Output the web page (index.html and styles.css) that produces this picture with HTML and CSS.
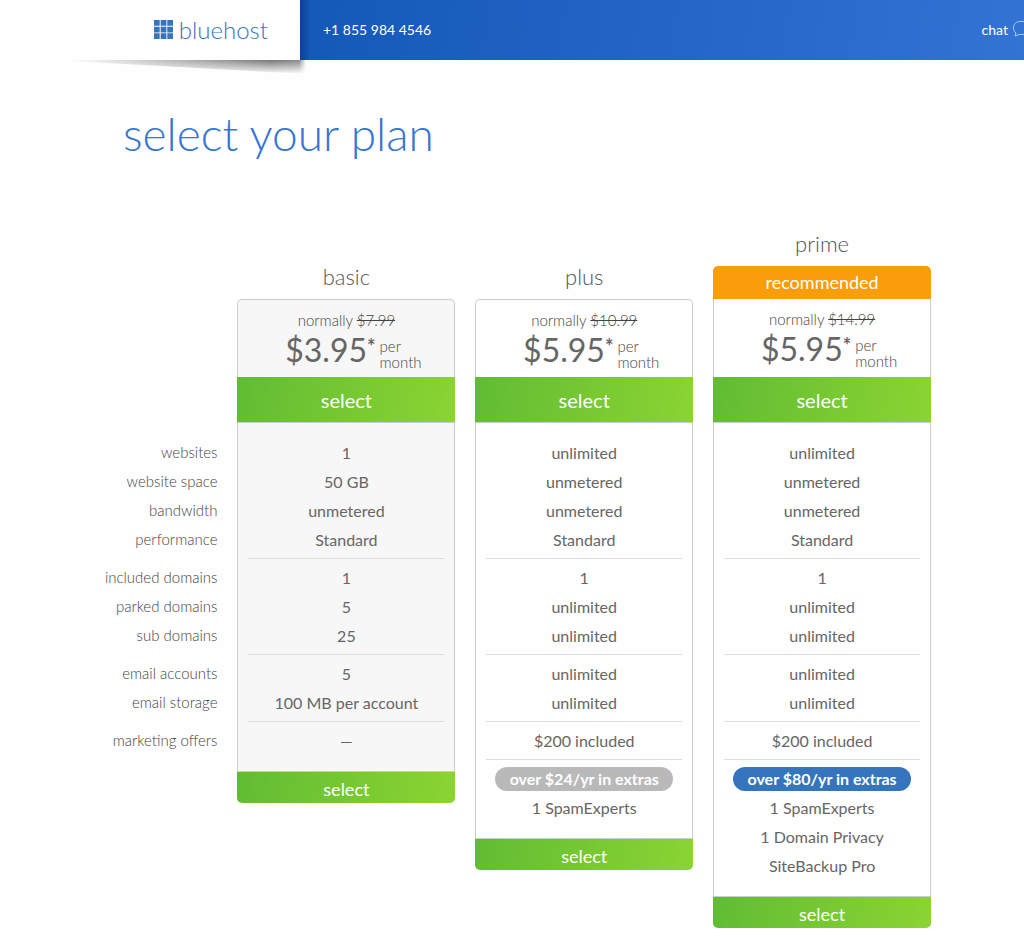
FILE: index.html
```html
<!DOCTYPE html>
<html lang="en">
<head>
    <meta charset="UTF-8">
    <meta name="viewport" content="width=device-width, initial-scale=1.0">
    <title>select your plan - bluehost</title>
    <link rel="stylesheet" href="styles.css">
</head>
<body>
    <header class="header">
        <a class="logo" href="#">
            <svg class="logo-icon" viewBox="0 0 19 19" aria-hidden="true">
                <path fill="#3575bd" d="M0 0h5.700v5.700H0zM6.700 0h5.700v5.700H6.700zM13.300 0H19v5.700h-5.700zM0 6.700h5.700v5.700H0zM6.700 6.700h5.700v5.700H6.700zM13.300 6.700H19v5.700h-5.700zM0 13.300h5.700V19H0zM6.700 13.300h5.700V19H6.700zM13.300 13.300H19V19h-5.700z"/>
            </svg>
            <span>bluehost</span>
        </a>
        <div class="topbar">
            <a class="phone" href="tel:+18559844546">+1 855 984 4546</a>
            <a class="chat" href="#">
                chat
                <svg class="chat-icon" viewBox="0 0 20 16" aria-hidden="true">
                    <path fill="none" stroke="#a9c8f5" d="M7 .5h6c4 0 6.500 2.800 6.500 6.500s-2.500 6.500-6.500 6.500H6L2 15l1-3C1.300 10.700.5 9 .5 7 .5 3.300 3 .5 7 .5z"/>
                </svg>
            </a>
        </div>
    </header>

    <main class="container">
        <h1>select your plan</h1>

        <div class="plans">
            <div class="labels">
                <ul class="group">
                    <li>websites</li>
                    <li>website space</li>
                    <li>bandwidth</li>
                    <li>performance</li>
                </ul>
                <ul class="group">
                    <li>included domains</li>
                    <li>parked domains</li>
                    <li>sub domains</li>
                </ul>
                <ul class="group">
                    <li>email accounts</li>
                    <li>email storage</li>
                </ul>
                <ul class="group">
                    <li>marketing offers</li>
                </ul>
            </div>

            <section class="plan plan-basic">
                <h2>basic</h2>
                <div class="card">
                    <div class="price-box">
                        <p class="normally">normally <s>$7.99</s></p>
                        <p class="price"><strong>$3.95<sup>*</sup></strong> <span>per<br>month</span></p>
                    </div>
                    <button class="select" type="button">select</button>
                    <div class="features">
                        <ul class="group">
                            <li>1</li>
                            <li>50 GB</li>
                            <li>unmetered</li>
                            <li>Standard</li>
                        </ul>
                        <ul class="group">
                            <li>1</li>
                            <li>5</li>
                            <li>25</li>
                        </ul>
                        <ul class="group">
                            <li>5</li>
                            <li>100 MB per account</li>
                        </ul>
                        <ul class="group">
                            <li>—</li>
                        </ul>
                    </div>
                    <button class="select select-bottom" type="button">select</button>
                </div>
            </section>

            <section class="plan">
                <h2>plus</h2>
                <div class="card">
                    <div class="price-box">
                        <p class="normally">normally <s>$10.99</s></p>
                        <p class="price"><strong>$5.95<sup>*</sup></strong> <span>per<br>month</span></p>
                    </div>
                    <button class="select" type="button">select</button>
                    <div class="features">
                        <ul class="group">
                            <li>unlimited</li>
                            <li>unmetered</li>
                            <li>unmetered</li>
                            <li>Standard</li>
                        </ul>
                        <ul class="group">
                            <li>1</li>
                            <li>unlimited</li>
                            <li>unlimited</li>
                        </ul>
                        <ul class="group">
                            <li>unlimited</li>
                            <li>unlimited</li>
                        </ul>
                        <ul class="group">
                            <li>$200 included</li>
                        </ul>
                        <ul class="group">
                            <li><span class="extras">over $24/yr in extras</span></li>
                            <li>1 SpamExperts</li>
                        </ul>
                    </div>
                    <button class="select select-bottom" type="button">select</button>
                </div>
            </section>

            <section class="plan plan-prime">
                <h2>prime</h2>
                <p class="recommended">recommended</p>
                <div class="card">
                    <div class="price-box">
                        <p class="normally">normally <s>$14.99</s></p>
                        <p class="price"><strong>$5.95<sup>*</sup></strong> <span>per<br>month</span></p>
                    </div>
                    <button class="select" type="button">select</button>
                    <div class="features">
                        <ul class="group">
                            <li>unlimited</li>
                            <li>unmetered</li>
                            <li>unmetered</li>
                            <li>Standard</li>
                        </ul>
                        <ul class="group">
                            <li>1</li>
                            <li>unlimited</li>
                            <li>unlimited</li>
                        </ul>
                        <ul class="group">
                            <li>unlimited</li>
                            <li>unlimited</li>
                        </ul>
                        <ul class="group">
                            <li>$200 included</li>
                        </ul>
                        <ul class="group">
                            <li><span class="extras">over $80/yr in extras</span></li>
                            <li>1 SpamExperts</li>
                            <li>1 Domain Privacy</li>
                            <li>SiteBackup Pro</li>
                        </ul>
                    </div>
                    <button class="select select-bottom" type="button">select</button>
                </div>
            </section>
        </div>
    </main>
</body>
</html>
```
FILE: styles.css
```css
* {
    margin: 0;
    padding: 0;
    box-sizing: border-box;
}

body {
    background-color: #fefefe;
    color: #666;
    font-family: Lato, "Open Sans", sans-serif;
    font-size: 16px;
}

a {
    color: inherit;
    text-decoration: none;
}

ul {
    list-style: none;
}

/* header */
.header {
    display: flex;
    height: 60px;
}

.logo {
    position: relative;
    display: flex;
    flex: none;
    align-items: center;
    justify-content: flex-end;
    gap: 6px;
    width: 300px;
    padding: 0 32px 2px 0;
    background-color: #fefefe;
    color: #3575bd;
    font-size: 24px;
    font-weight: 300;
}

/* lifted corner shadow under the logo tab */
.logo::after {
    content: "";
    position: absolute;
    top: 100%;
    left: 70px;
    right: -6px;
    height: 14px;
    background: linear-gradient(to right, transparent, #777 85%, #888 97%, transparent);
    clip-path: polygon(0 0, 100% 0, 100% 100%, 0 1px);
    -webkit-mask-image: linear-gradient(to bottom, #000, transparent);
    mask-image: linear-gradient(to bottom, #000, transparent);
}

.logo-icon {
    width: 19px;
    height: 19px;
}

.topbar {
    display: flex;
    flex: 1;
    align-items: center;
    justify-content: space-between;
    padding: 0 0 2px 23px;
    overflow: hidden;
    background: linear-gradient(to right, rgba(0, 20, 80, 0.35), transparent 10px),
        linear-gradient(100deg, #1458b8, #3273d4);
    color: #fff;
    font-size: 14px;
}

.chat {
    display: flex;
    align-items: center;
    gap: 5px;
    margin-right: -9px;
}

.chat-icon {
    width: 20px;
    height: 16px;
}

/* page */
.container {
    max-width: 838px;
    margin: 0 auto;
    padding-bottom: 12px;
}

h1 {
    padding: 42px 0 56px 30px;
    color: #3575d3;
    font-size: 46px;
    font-weight: 300;
    line-height: 64px;
}

.plans {
    display: grid;
    grid-template-columns: minmax(0, 4fr) repeat(3, minmax(0, 7fr));
    gap: 20px;
    align-items: start;
}

.labels {
    padding-top: 216px;
    color: #444;
    font-size: 15px;
    font-weight: 300;
    text-align: right;
    white-space: nowrap;
}

.plan {
    padding-top: 33px;
    text-align: center;
}

.plan-prime {
    padding-top: 0;
}

h2 {
    color: #555;
    font-size: 22px;
    font-weight: 300;
    line-height: 44px;
}

.recommended {
    border-radius: 5px 5px 0 0;
    background-color: #fa9d0a;
    color: #fff;
    font-size: 18px;
    line-height: 33px;
}

.card {
    border-radius: 5px;
    background-color: #fefefe;
}

.price-box {
    height: 78px;
    padding-top: 10px;
    border: 1px solid #ccc;
    border-bottom: 0;
    border-radius: 5px 5px 0 0;
}

.plan-prime .price-box {
    border-top: 0;
    border-radius: 0;
}

.plan-basic .card {
    background-color: #f7f7f7;
}

.normally {
    color: #444;
    font-size: 15px;
    font-weight: 300;
    line-height: 20px;
}

.price {
    display: flex;
    align-items: center;
    justify-content: center;
    gap: 4px;
    padding-left: 14px;
    font-weight: 300;
    line-height: 16px;
    text-align: left;
}

.price strong {
    font-size: 32px;
    font-weight: 400;
    line-height: 36px;
}

.price sup {
    font-size: 20px;
    font-weight: 700;
    line-height: 0;
    vertical-align: 8px;
}

.price span {
    padding-top: 8px;
    color: #444;
    font-size: 15px;
}

.select {
    display: block;
    width: 100%;
    height: 45px;
    border: 0;
    background: linear-gradient(100deg, #61bc33, #8bd432);
    color: #fff;
    font-family: inherit;
    font-size: 20px;
    cursor: pointer;
}

.select-bottom {
    height: 31px;
    padding-top: 2px;
    border-radius: 0 0 5px 5px;
    font-size: 18px;
}

.features {
    padding: 15px 10px 16px;
    border: 1px solid #ccc;
}

.group li {
    line-height: 29px;
}

.group + .group {
    margin-top: 4px;
    padding-top: 4px;
    border-top: 1px solid #ddd;
}

.labels .group + .group {
    border-color: transparent;
}

.extras {
    display: block;
    margin: 3px 9px 2px;
    border-radius: 12px;
    background-color: #b9b9b9;
    color: #fff;
    font-weight: 700;
    line-height: 24px;
}

.plan-prime .extras {
    background-color: #3575bd;
}
```
